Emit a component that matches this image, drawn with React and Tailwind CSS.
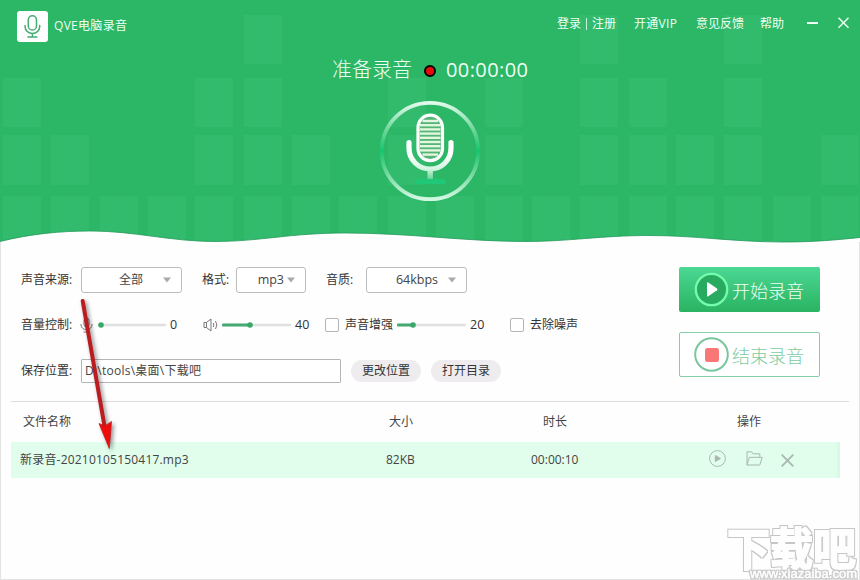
import React from 'react';
import clsx from 'clsx';

// Equalizer blocks behind the header, one list of x offsets per row
const blockRows = [
  { y: 15, h: 49, xs: [244, 580, 724] },
  { y: 78, h: 49, xs: [3, 195, 244, 388, 485, 580, 629, 724] },
  { y: 135, h: 50, xs: [3, 51, 195, 244, 292, 388, 485, 580, 629, 676, 724, 821] },
  { y: 196, h: 54, xs: [3, 51, 100, 148, 195, 244, 292, 339, 388, 436, 485, 532, 580, 629, 676, 724, 773, 821] },
];

const WAVE = 'M0 241.5C30 234 60 231 90 231C135 231 170 241.5 215 241.5C260 241.5 290 233 345 233C410 233 465 241.5 525 241.5C570 241.5 600 235.5 650 235.5C695 235.5 735 242 783 242C815 242 835 240 860 237.5';

function HeaderBackground() {
  return (
    <svg className="absolute inset-0" width="860" height="250" viewBox="0 0 860 250">
      <rect width="860" height="250" fill="#2bb765" />
      {blockRows.map(({ y, h, xs }) =>
        xs.map((x) => <rect key={`${x}-${y}`} x={x} y={y} width="38" height={h} fill="#32bb6d" />)
      )}
      <path d={`${WAVE}V250H0Z`} fill="#fefefe" />
      <path d={WAVE} fill="none" stroke="#22995a" strokeWidth="0.8" />
    </svg>
  );
}

function Logo() {
  return (
    <div className="flex h-[31px] w-[31px] items-center justify-center rounded-[3px] bg-white">
      <svg width="19" height="25" viewBox="0 0 19 25" fill="none" stroke="#41ad70" strokeWidth="1.5" strokeLinecap="round">
        <rect x="5.3" y="1.8" width="8.2" height="14.2" rx="4.1" />
        <path d="M2.1 11.5v1.2a7.3 6.8 0 0 0 14.6 0v-1.2M9.4 19.5v3.3M4.9 23h9" />
      </svg>
    </div>
  );
}

function BigMic() {
  return (
    <svg className="shrink-0" width="102" height="102" viewBox="0 0 102 102" fill="none">
      <defs>
        <linearGradient id="ring" x1="0" y1="0" x2="0" y2="1">
          <stop offset="0" stopColor="#e2faec" />
          <stop offset="0.28" stopColor="#6fd79b" />
          <stop offset="0.5" stopColor="#17c46d" />
          <stop offset="0.72" stopColor="#6fd79b" />
          <stop offset="1" stopColor="#d3f8e2" />
        </linearGradient>
        <linearGradient id="stand" gradientUnits="userSpaceOnUse" x1="0" y1="54" x2="0" y2="84">
          <stop offset="0" stopColor="#ffffff" />
          <stop offset="0.5" stopColor="#d4f5e2" />
          <stop offset="0.85" stopColor="#5ed492" />
          <stop offset="1" stopColor="#1fc46c" />
        </linearGradient>
      </defs>
      <circle cx="51" cy="51" r="48.2" stroke="url(#ring)" strokeWidth="3.8" />
      <rect x="39" y="15.2" width="24.5" height="45.5" rx="12.2" fill="#55b576" stroke="#fff" strokeWidth="3.2" />
      {[21, 25.2, 29.4, 33.6, 37.8, 42, 46.2, 50.4, 54.6].map((y) => (
        <path key={y} d={`M${y < 22 || y > 54 ? 43.5 : 41} ${y}H${y < 22 || y > 54 ? 59 : 61.5}`} stroke="#e1f7de" strokeWidth="2.4" />
      ))}
      <path d="M30 42.5v5.5c0 12 9.5 21 21.2 21S72 60 72 48v-5.5" stroke="url(#stand)" strokeWidth="5.2" strokeLinecap="round" />
      <rect x="48.4" y="70" width="5.5" height="10" fill="url(#stand)" />
      <rect x="35.5" y="79" width="31.5" height="5" rx="2.5" fill="#1fc776" />
    </svg>
  );
}

function Select({ value, className, padding }) {
  return (
    <div className={clsx('flex h-[26px] items-center justify-end rounded-[3px] border border-[#bcbcbc] bg-white text-[#444]', className)}>
      <span className="whitespace-nowrap">{value}</span>
      <svg className={padding} width="8" height="6" viewBox="0 0 8 6" fill="#aaa"><path d="M0 .5h8L4 5.5z" /></svg>
    </div>
  );
}

function Slider({ fill, width }) {
  return (
    <svg className="shrink-0" width={width} height="8" viewBox={`0 0 ${width} 8`}>
      <rect y="2.8" width={width} height="2.4" rx="1" fill="#e0e0e0" />
      {fill > 3 && <rect y="2.6" width={fill} height="2.8" rx="1" fill="#45aa71" />}
      <circle cx={fill} cy="4" r="2.8" fill="#38a768" />
    </svg>
  );
}

function Checkbox() {
  return <div className="h-[14px] w-[14px] shrink-0 rounded-[2px] border border-[#b4b4b4] bg-white" />;
}

function Header() {
  return (
    <header className="relative h-[250px] shrink-0 text-[#effff5]">
      <HeaderBackground />
      <div className="relative flex h-[45px] pl-[17px] pt-[11px]">
        <Logo />
        <h1 className="ml-[6px] mt-[5px] w-[497px] text-[12px] leading-[20px] tracking-[0.3px]">QVE电脑录音</h1>
        <nav className="mt-[3px] flex h-5 items-center whitespace-nowrap">
          <span className="ml-[6px] w-[24px]">登录</span>
          <i className="ml-[5px] h-3 w-px bg-[#c9f1da]" />
          <span className="ml-[5px] w-[42px]">注册</span>
          <span className="w-[62px] tracking-[0.3px]">开通VIP</span>
          <span className="w-[64px]">意见反馈</span>
          <span className="w-[24px]">帮助</span>
        </nav>
        <svg className="ml-[23px] mt-[5px]" width="42" height="14" viewBox="0 0 42 14" fill="none" stroke="#effff5">
          <path d="M0 7h11" strokeWidth="2" />
          <path d="M31.5 1.7l10 10M41.5 1.7l-10 10" strokeWidth="1.5" />
        </svg>
      </div>
      <div className="relative mt-[11px] flex h-7 items-center pl-[332px] text-[20px]">
        <span className="w-[80px] whitespace-nowrap font-light">准备录音</span>
        <i className="ml-[12px] mt-[2px] h-3 w-3 rounded-full border-2 border-black bg-[#e90b0b]" />
        <span className="ml-[10px] tracking-[0.4px]">00:00:00</span>
      </div>
      <div className="relative mt-[16px] flex pl-[379px]">
        <BigMic />
      </div>
    </header>
  );
}

function Controls() {
  return (
    <div className="w-[679px] pl-[21px] text-[#333]">
      <div className="mt-[17px] flex h-[26px] items-center whitespace-nowrap">
        <span className="w-[60px]">声音来源:</span>
        <Select value="全部" className="w-[101px] pr-[10px]" padding="ml-5" />
        <span className="ml-[20px] w-[34px]">格式:</span>
        <Select value="mp3" className="w-[70px] pr-[10px] text-[12.5px]" padding="ml-[3px]" />
        <span className="ml-[20px] w-[40px]">音质:</span>
        <Select value="64kbps" className="w-[101px] pr-[10px] text-[12.5px]" padding="ml-[10px]" />
      </div>

      <div className="mt-[19px] flex h-[26px] items-center whitespace-nowrap">
        <span className="w-[59px]">音量控制:</span>
        <svg width="13" height="16" viewBox="0 0 13 16" fill="none" stroke="#777">
          <rect x="4" y="1" width="5" height="9" rx="2.5" />
          <path d="M1 7v1a5.5 4.7 0 0 0 11 0V7M6.5 13v2M3.5 15h6" />
        </svg>
        <div className="ml-[5px] flex w-[69px] items-center"><Slider width={68} fill={3} /></div>
        <span className="ml-[3px] w-[33px] text-[12.5px]">0</span>
        <svg width="16" height="14" viewBox="0 0 16 14" fill="none" stroke="#777">
          <path d="M1 4.5h2.5L8 1v12L3.5 9.5H1zM3.5 4.5v5M10.3 5q1.2 2 0 4M12.5 3q2.7 4 0 8" />
        </svg>
        <div className="ml-[3px] flex"><Slider width={69} fill={28} /></div>
        <span className="ml-[4px] w-[30px] text-[12.5px]">40</span>
        <Checkbox />
        <span className="ml-[6px] w-[52px]">声音增强</span>
        <Slider width={69} fill={16} />
        <span className="ml-[4px] w-[40px] text-[12.5px]">20</span>
        <Checkbox />
        <span className="ml-[6px]">去除噪声</span>
      </div>

      <div className="mt-[20px] flex h-[26px] items-center whitespace-nowrap">
        <span className="w-[60px]">保存位置:</span>
        <div className="flex h-[24px] w-[260px] items-center rounded-[1px] border border-[#b5b5b5] bg-white pl-[3px] tracking-[0.25px] text-[#444]">D:\tools\桌面\下载吧</div>
        <button className="ml-[10px] h-[22px] w-[70px] rounded-full bg-[#eeecef]">更改位置</button>
        <button className="ml-[10px] h-[22px] w-[70px] rounded-full bg-[#eeecef]">打开目录</button>
      </div>
    </div>
  );
}

function RecordButtons() {
  return (
    <div className="flex flex-col gap-[20px] pt-[17px] text-[18px] font-light">
      <button className="flex h-[45px] w-[141px] items-center whitespace-nowrap rounded-[2px] bg-gradient-to-b from-[#4bd894] to-[#29b361] pl-[15px] text-[#effff5]">
        <svg width="35" height="35" viewBox="0 0 35 35">
          <circle cx="17.5" cy="17.5" r="15.7" fill="#28aa61" stroke="#74fbac" strokeWidth="2.3" />
          <path d="M13 11.3q0-1.4 1.3-.7l8.7 6q1 .8 0 1.6l-8.7 6q-1.3.7-1.3-.7z" fill="#fff" />
        </svg>
        <span className="ml-[3px] pt-[2px]">开始录音</span>
      </button>
      <button className="flex h-[45px] w-[141px] items-center whitespace-nowrap rounded-[2px] border border-[#83cfa6] bg-white pl-[14px] text-[#7dcba0]">
        <svg width="35" height="35" viewBox="0 0 35 35">
          <circle cx="17.5" cy="17.5" r="16.3" fill="#fff" stroke="#79c69c" strokeWidth="2" />
          <rect x="11" y="11" width="14" height="14" rx="2.5" fill="#fa7777" />
        </svg>
        <span className="ml-[3px] pt-[2px]">结束录音</span>
      </button>
    </div>
  );
}

function FileTable() {
  return (
    <section className="ml-[11px] mt-[17px] w-[838px] border-t border-[#dedede] text-[#444]">
      <div className="grid h-[40px] grid-cols-[375px_145px_198px_1fr] items-center">
        <span className="pl-[12px]">文件名称</span>
        <span className="pl-[3px]">大小</span>
        <span className="pl-[12px]">时长</span>
        <span className="pl-[8px]">操作</span>
      </div>
      <div className="grid h-[36px] w-[829px] grid-cols-[375px_145px_178px_1fr] items-center border-r-[3px] border-[#d5faea] bg-[#e1fdec]">
        <span className="pl-[9px] tracking-[0.2px]">新录音-20210105150417.mp3</span>
        <span>82KB</span>
        <span>00:00:10</span>
        <div className="flex items-center pb-[3px] text-[#a9b8af]">
          <svg width="17" height="17" viewBox="0 0 17 17" fill="none" stroke="currentColor">
            <circle cx="8.5" cy="8.5" r="7.9" />
            <path d="M6.3 5.5v6l5.2-3z" fill="currentColor" />
          </svg>
          <svg className="ml-[20px]" width="17" height="15" viewBox="0 0 17 15" fill="none" stroke="currentColor">
            <path d="M1 14V.8h4.6l1.4 2h6.8v3M1 14L3.3 6.3h12.9L13.8 14z" />
          </svg>
          <svg className="ml-[18px] mt-[3px]" width="13" height="13" viewBox="0 0 13 13" fill="none" stroke="currentColor" strokeWidth="1.8">
            <path d="M.7.7l11.6 11.6M12.3.7L.7 12.3" />
          </svg>
        </div>
      </div>
    </section>
  );
}

function PointerArrow() {
  return (
    <svg className="pointer-events-none absolute left-[70px] top-[290px] drop-shadow-[2px_2px_2px_rgba(0,0,0,0.45)]" width="60" height="165" viewBox="70 290 60 165">
      <path d="M82.7 301L104.5 426" stroke="#bb1c20" strokeWidth="4" strokeLinecap="round" />
      <path d="M99 423.5L105 426L111.5 421.5L109.3 448.5z" fill="#f00c0c" stroke="#b91919" strokeWidth="0.7" />
    </svg>
  );
}

// White lettering with an even grey outline grown around it
function Watermark() {
  return (
    <svg className="pointer-events-none absolute bottom-0 right-0" width="140" height="80" viewBox="0 -18 140 80" fill="#fefefe" stroke="#fefefe">
      <filter id="outline" x="-5%" y="-10%" width="110%" height="120%" colorInterpolationFilters="sRGB">
        <feMorphology in="SourceAlpha" operator="dilate" radius="1" result="grown" />
        <feFlood floodColor="#c6c6c6" />
        <feComposite in2="grown" operator="in" />
        <feMerge>
          <feMergeNode />
          <feMergeNode in="SourceGraphic" />
        </feMerge>
      </filter>
      <text x="7" y="48" fontSize="45" fontWeight="700" textLength="129" lengthAdjust="spacingAndGlyphs" strokeWidth="1.8" filter="url(#outline)" fontFamily="'Noto Sans CJK SC', sans-serif">下载吧</text>
      <text x="30" y="59.5" fontSize="12" fontWeight="400" textLength="107" lengthAdjust="spacingAndGlyphs" strokeWidth="0.5" filter="url(#outline)" fontFamily="'Liberation Sans', sans-serif">www.xiazaiba.com</text>
    </svg>
  );
}

export default function App() {
  return (
    <div className="relative flex h-[580px] w-[860px] flex-col overflow-hidden bg-[#fefefe] font-['Open_Sans','Noto_Sans_CJK_SC',sans-serif] text-[12px] leading-none">
      <Header />
      <main className="flex shrink-0">
        <Controls />
        <RecordButtons />
      </main>
      <FileTable />
      {/* Window frame */}
      <div className="pointer-events-none absolute inset-x-0 bottom-0 top-[242px] border-x border-b border-[#e3e3e3]" />
      <Watermark />
      <PointerArrow />
    </div>
  );
}
